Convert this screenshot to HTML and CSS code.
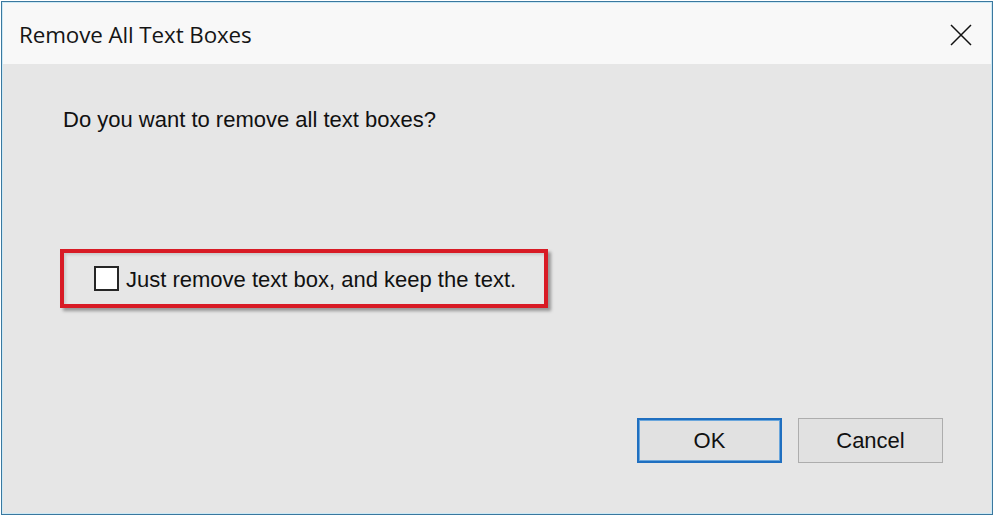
FILE: index.html
```html
<!DOCTYPE html>
<html>
<head>
<meta charset="utf-8">
<link rel="stylesheet" href="styles.css">
</head>
<body>
<div class="window">
  <div class="titlebar">
    <span class="title">Remove All Text Boxes</span>
    <svg class="close" width="22" height="22" viewBox="0 0 22 22"><path d="M1 1 L21 21 M21 1 L1 21" stroke="#111" stroke-width="1.5" fill="none"/></svg>
  </div>
  <div class="content">
    <p class="question">Do you want to remove all text boxes?</p>
    <div class="highlight">
      <label class="check"><span class="box"></span><span class="label">Just remove text box, and keep the text.</span></label>
    </div>
    <div class="buttons">
      <button class="btn btn-default">OK</button>
      <button class="btn">Cancel</button>
    </div>
  </div>
</div>
</body>
</html>
```

FILE: styles.css
```css
html, body {
  margin: 0;
  padding: 0;
  background: #ffffff;
}
body {
  width: 996px;
  height: 518px;
  overflow: hidden;
  padding: 1px 0 0 1px;
  box-sizing: border-box;
}
.window {
  width: 992px;
  height: 514px;
  box-sizing: border-box;
  border: 1px solid #3a789f;
  box-shadow: inset 0 0 0 1px #cde9f5;
  display: flex;
  flex-direction: column;
  background: #e6e6e6;
}
.titlebar {
  height: 61px;
  flex: none;
  margin: 1px 1px 0 1px;
  background: #f8f8f8;
  display: flex;
  align-items: center;
  justify-content: space-between;
  padding: 1px 19px 0 16px;
  box-sizing: border-box;
}
.title {
  font-family: "Open Sans", "Noto Sans", sans-serif;
  font-size: 22.4px;
  color: #151515;
  letter-spacing: -0.1px;
}
.close {
  display: block;
  margin-top: 1px;
}
.content {
  flex: 1;
  margin: 0 1px 1px 1px;
  background: #e6e6e6;
  display: flex;
  flex-direction: column;
  font-family: "Liberation Sans", Arial, sans-serif;
  font-size: 22px;
  color: #111;
}
.question {
  margin: 43px 0 0 60px;
  line-height: 26px;
}
.highlight {
  margin: 116px 0 0 57px;
  width: 488px;
  height: 59px;
  box-sizing: border-box;
  border: 4px solid #d81b25;
  box-shadow: 3px 3px 3px rgba(0, 0, 0, 0.35), inset 2px 2px 3px rgba(0, 0, 0, 0.12);
  display: flex;
  align-items: center;
  padding-left: 30px;
}
.check {
  display: flex;
  align-items: center;
  gap: 7px;
}
.box {
  width: 25px;
  height: 25px;
  box-sizing: border-box;
  border: 2px solid #262626;
  background: #ffffff;
  flex: none;
}
.label {
  line-height: 26px;
  margin-top: 2px;
}
.buttons {
  margin-top: auto;
  margin-bottom: 50px;
  margin-right: 48px;
  display: flex;
  justify-content: flex-end;
  gap: 16px;
}
.btn {
  width: 145px;
  height: 45px;
  box-sizing: border-box;
  background: #e1e1e1;
  border: 1px solid #adadad;
  font-family: "Liberation Sans", Arial, sans-serif;
  font-size: 22px;
  color: #111;
  padding: 0;
}
.btn-default {
  border: 2px solid #1f6fc0;
  box-shadow: inset 0 0 0 1px #6aa6dc;
}
```
